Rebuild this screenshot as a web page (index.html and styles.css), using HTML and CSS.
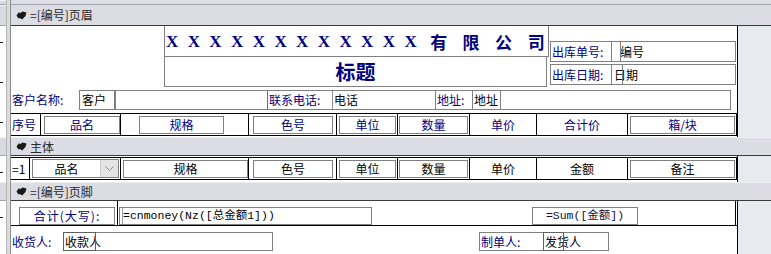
FILE: index.html
```html
<!DOCTYPE html>
<html lang="zh">
<head>
<meta charset="utf-8">
<title>报表设计</title>
<link rel="stylesheet" href="styles.css">
</head>
<body>
<div class="designer">
  <div class="sec sec-top"><div class="rul rul-bar"></div><div class="sep"></div><div class="strip"></div></div>

  <div class="sec"><div class="rul rul-bar"></div><div class="sep"></div>
    <div class="bar bar-first">
      <svg class="sel" viewBox="0 0 11 9" width="11" height="9"><path d="M0.5 4.5 L3 1 L4 2.2 L6.5 0.5 L10.5 1.5 L9.5 5 L6 8.5 L4 7 L2.5 7.5 Z" fill="#1a1a1a"/></svg>
      <span class="bar-text">=[编号]页眉</span>
    </div>
  </div>

  <div class="sec"><div class="rul rul-ticks"></div><div class="sep"></div>
    <div class="canvas canvas-hdr">
      <div class="title-row">
        <div class="title-col">
          <div class="title-co"><span class="co-x">XXXXXXXXXXXX</span><span class="co-cn">有限公<span class="co-last">司</span></span></div>
          <div class="title-main">标题</div>
        </div>
        <div class="info-col">
          <div class="info-row"><div class="lbl info-lbl">出库单号:</div><div class="info-val mark-a">编号</div></div>
          <div class="info-row"><div class="lbl info-lbl">出库日期:</div><div class="info-val mark-b">日期</div></div>
        </div>
      </div>
      <div class="cust-row">
        <div class="lbl cust-lbl">客户名称:</div>
        <div class="cust-val">客户</div>
        <div class="cust-box">
          <div class="lbl tel-lbl">联系电话:</div>
          <div class="tel-val">电话</div>
          <div class="lbl addr-lbl">地址:</div>
          <div class="addr-val">地址</div>
        </div>
      </div>
      <div class="grid-row head-row">
        <div class="cell w30"><span class="lbl plain-left">序号</span></div>
        <div class="cell w80"><div class="ib ml3 iw76">品名</div></div>
        <div class="cell w128"><div class="ib ml18 iw85">规格</div></div>
        <div class="cell w88"><div class="ib ml4 iw80">色号</div></div>
        <div class="cell w61"><div class="ib ml2 iw57">单位</div></div>
        <div class="cell w72"><div class="ib ml1 iw69">数量</div></div>
        <div class="cell w67 center"><span>单价</span></div>
        <div class="cell w91 center"><span>合计价</span></div>
        <div class="cell w109"><div class="ib ml2 iw105">箱/块</div></div>
      </div>
    </div>
    <div class="gutter"></div>
  </div>

  <div class="sec"><div class="rul rul-bar"></div><div class="sep"></div>
    <div class="bar bar-body">
      <svg class="sel" viewBox="0 0 11 9" width="11" height="9"><path d="M0.5 4.5 L3 1 L4 2.2 L6.5 0.5 L10.5 1.5 L9.5 5 L6 8.5 L4 7 L2.5 7.5 Z" fill="#1a1a1a"/></svg>
      <span class="bar-text">主体</span>
    </div>
  </div>

  <div class="sec"><div class="rul rul-ticks"></div><div class="sep"></div>
    <div class="canvas canvas-detail">
      <div class="grid-row detail-row">
        <div class="cell w19"><span class="plain-left">=1</span></div>
        <div class="cell w91">
          <div class="combo">
            <span class="combo-text">品名</span>
            <span class="combo-btn"><svg viewBox="0 0 9 5" width="9" height="5"><polyline points="0.5,0.5 4.5,4.5 8.5,0.5" fill="none" stroke="#8a8a8a" stroke-width="1"/></svg></span>
          </div>
        </div>
        <div class="cell w128"><div class="ib dark ml2 iw125">规格</div></div>
        <div class="cell w88"><div class="ib dark ml4 iw80">色号</div></div>
        <div class="cell w61"><div class="ib dark ml2 iw57">单位</div></div>
        <div class="cell w72"><div class="ib dark ml1 iw69">数量</div></div>
        <div class="cell w67 center dark"><span>单价</span></div>
        <div class="cell w91 center dark"><span>金额</span></div>
        <div class="cell w109"><div class="ib dark ml2 iw105">备注</div></div>
      </div>
    </div>
    <div class="gutter"></div>
  </div>

  <div class="sec"><div class="rul rul-bar"></div><div class="sep"></div>
    <div class="bar bar-foot">
      <svg class="sel" viewBox="0 0 11 9" width="11" height="9"><path d="M0.5 4.5 L3 1 L4 2.2 L6.5 0.5 L10.5 1.5 L9.5 5 L6 8.5 L4 7 L2.5 7.5 Z" fill="#1a1a1a"/></svg>
      <span class="bar-text">=[编号]页脚</span>
    </div>
  </div>

  <div class="sec sec-last"><div class="rul rul-ticks"></div><div class="sep"></div>
    <div class="canvas canvas-foot">
      <div class="sum-row">
        <div class="sum-a"><div class="ib sum-lbl">合计(大写):</div></div>
        <div class="sum-b">
          <div class="ib expr cn-box"><span class="mini"></span><span class="expr-text">=cnmoney(Nz([总金额1]))</span></div>
          <div class="ib expr sum-box">=Sum([金额])</div>
        </div>
      </div>
      <div class="sign-row">
        <div class="lbl sign-lbl">收货人:</div>
        <div class="sign-box recv"><span class="mini-box"></span><span class="sign-val">收款人</span></div>
        <div class="sign-box maker"><span class="lbl maker-lbl">制单人:</span><span class="mini-box"></span><span class="sign-val">发货人</span></div>
      </div>
    </div>
    <div class="gutter"></div>
  </div>
</div>
</body>
</html>
```

FILE: styles.css
```css
* { box-sizing: border-box; margin: 0; padding: 0; }

body {
  margin: 0;
  background: #fff;
  font-family: "Noto Sans CJK SC", "Liberation Sans", sans-serif;
  font-size: 12px;
  line-height: 1;
  color: #000;
  overflow: hidden;
}

.designer { width: 771px; height: 254px; overflow: hidden; }

.sec { display: flex; }

.rul { width: 6px; flex: none; }
.rul-bar { background: #d9d9e1; border-top: 1px solid #f4f4f8; border-bottom: 1px solid #a4a4ac; }
.rul-ticks {
  background:
    repeating-linear-gradient(to bottom, transparent 0 16px, #202020 16px 17px, transparent 17px 40px) left top / 3px 100% no-repeat,
    #fff;
}

.sep {
  width: 5px;
  flex: none;
  background: #dcdcdc;
  border-left: 1px solid #b4b4b4;
  border-right: 1px solid #8c8c8c;
}

/* top strip */
.sec-top { height: 5px; }
.strip { flex: 1; background: #dedee6; border-bottom: 1px solid #a4a4ac; }

/* section bars */
.bar {
  flex: 1;
  display: flex;
  align-items: center;
  background: #dcdce4;
  border-bottom: 1px solid #3a3a3a;
  padding-left: 5px;
  color: #2a2a2a;
}
.bar-first { height: 21px; }
.bar-body { height: 19px; border-top: 1px solid #eeeef2; }
.bar-foot { height: 19px; border-top: 1px solid #eeeef2; }
.sel { flex: none; margin-right: 3px; }
.bar-text { font-size: 12px; }

/* canvases */
.canvas { width: 726px; flex: none; background: #fff; }
.gutter { flex: 1; background: #e7eaef; border-left: 1px solid #000; }

.canvas-hdr { height: 111px; }
.canvas-detail { height: 26px; padding-top: 1px; }
.canvas-foot { height: 60px; }

.lbl { color: #000080; }

/* header: title */
.title-row { display: flex; height: 61px; }
.title-col { margin-left: 153px; width: 385px; }
.title-co {
  height: 31px;
  border: 1px solid #808080;
  border-top: none;
  display: flex;
  align-items: center;
  padding-left: 1px;
  color: #000080;
  font-weight: bold;
  white-space: nowrap;
}
.co-x {
  flex: none;
  font-family: "Liberation Serif", serif;
  font-size: 17px;
  letter-spacing: 9.4px;
}
.co-cn {
  flex: none;
  margin-left: 4px;
  font-size: 17px;
  letter-spacing: 15.5px;
}
.co-last { letter-spacing: 0; }
.title-main {
  width: 383px;
  height: 30px;
  border: 1px solid #808080;
  border-top: none;
  display: flex;
  align-items: center;
  justify-content: center;
  color: #000080;
  font-weight: bold;
  font-size: 20px;
}

.info-col { margin-left: 1px; margin-top: 15px; display: flex; flex-direction: column; gap: 2px; }
.info-row { display: flex; height: 21px; }
.info-lbl {
  width: 62px;
  border: 1px solid #808080;
  display: flex;
  align-items: center;
  padding-left: 1px;
}
.info-val {
  position: relative;
  width: 125px;
  margin-left: -1px;
  border: 1px solid #808080;
  display: flex;
  align-items: center;
  padding-left: 2px;
}
.mark-a { padding-left: 8px; }
.mark-a::before, .mark-b::before {
  content: "";
  position: absolute;
  top: -1px;
  bottom: -1px;
  border-left: 1px solid #808080;
}
.mark-a::before { left: 8px; }
.mark-b::before { left: 10px; }

/* customer row */
.cust-row { display: flex; height: 20px; margin-top: 3px; }
.cust-lbl { width: 68px; display: flex; align-items: center; padding-left: 1px; }
.cust-val {
  width: 36px;
  border: 1px solid #808080;
  display: flex;
  align-items: center;
  padding-left: 2px;
}
.cust-box {
  width: 616px;
  border: 1px solid #808080;
  display: flex;
}
.tel-lbl {
  margin-left: 151px;
  width: 66px;
  border-left: 1px solid #707070;
  border-right: 1px solid #909090;
  display: flex;
  align-items: center;
  padding-left: 1px;
}
.tel-val { width: 102px; display: flex; align-items: center; padding-left: 1px; }
.addr-lbl {
  width: 38px;
  border-left: 1px solid #808080;
  border-right: 1px solid #808080;
  display: flex;
  align-items: center;
  padding-left: 1px;
}
.addr-val {
  width: 28px;
  border-right: 1px solid #808080;
  display: flex;
  align-items: center;
  padding-left: 1px;
}

/* grid rows */
.grid-row {
  display: flex;
  height: 23px;
  border-top: 1px solid #000;
  border-bottom: 1px solid #000;
}
.head-row { margin-top: 3px; }
.cell {
  flex: none;
  display: flex;
  align-items: center;
  border-right: 1px solid #000;
  color: #000080;
}
.center { justify-content: center; }
.dark, .detail-row .cell { color: #000; }
.plain-left { padding-left: 1px; }

.w19 { width: 19px; }
.w30 { width: 30px; }
.w61 { width: 61px; }
.w67 { width: 67px; }
.w72 { width: 72px; }
.w80 { width: 80px; }
.w88 { width: 88px; }
.w91 { width: 91px; }
.w109 { width: 109px; }
.w128 { width: 128px; }

.ib {
  flex: none;
  height: 18px;
  border: 1px solid #808080;
  display: flex;
  align-items: center;
  justify-content: center;
  color: #000080;
}
.ib.dark { color: #000; }
.ml1 { margin-left: 1px; }
.ml2 { margin-left: 2px; }
.ml3 { margin-left: 3px; }
.ml4 { margin-left: 4px; }
.ml18 { margin-left: 18px; }
.iw57 { width: 57px; }
.iw69 { width: 69px; }
.iw76 { width: 76px; }
.iw80 { width: 80px; }
.iw85 { width: 85px; }
.iw105 { width: 105px; }
.iw125 { width: 125px; }

/* combo */
.combo {
  margin-left: 2px;
  width: 87px;
  height: 19px;
  border: 1px solid #808080;
  display: flex;
}
.combo-text { flex: 1; display: flex; align-items: center; justify-content: center; color: #000; }
.combo-btn {
  width: 18px;
  background: #e4e4e4;
  border-left: 1px solid #c8c8c8;
  display: flex;
  align-items: center;
  justify-content: center;
}

/* footer */
.sum-row { display: flex; height: 25px; border-bottom: 1px solid #000; }
.sum-a { width: 107px; border-right: 1px solid #000; padding-top: 6px; }
.sum-lbl { margin-left: 8px; width: 96px; letter-spacing: 1px; }
.sum-b { width: 618px; border-right: 1px solid #000; display: flex; padding-top: 6px; }
.expr {
  font-family: "Liberation Mono", "Noto Sans CJK SC", monospace;
  font-size: 11.5px;
  color: #000;
}
.cn-box { margin-left: 1px; width: 253px; justify-content: flex-start; }
.mini { width: 3px; height: 16px; border-right: 1px solid #a0a0a0; flex: none; }
.sum-box { margin-left: 160px; width: 106px; color: #10103a; }

.sign-row { display: flex; height: 19px; margin-top: 6px; }
.sign-lbl { width: 52px; display: flex; align-items: center; padding-left: 1px; }
.sign-box {
  position: relative;
  border: 1px solid #808080;
  display: flex;
  align-items: center;
}
.recv { width: 210px; }
.maker { margin-left: 206px; width: 130px; }
.mini-box {
  position: absolute;
  top: -1px;
  bottom: -1px;
  border: 1px solid #606060;
}
.recv .mini-box { left: -1px; width: 33px; }
.maker .mini-box { left: 63px; width: 21px; }
.sign-val { padding-left: 1px; }
.maker-lbl { width: 64px; padding-left: 1px; }
```
